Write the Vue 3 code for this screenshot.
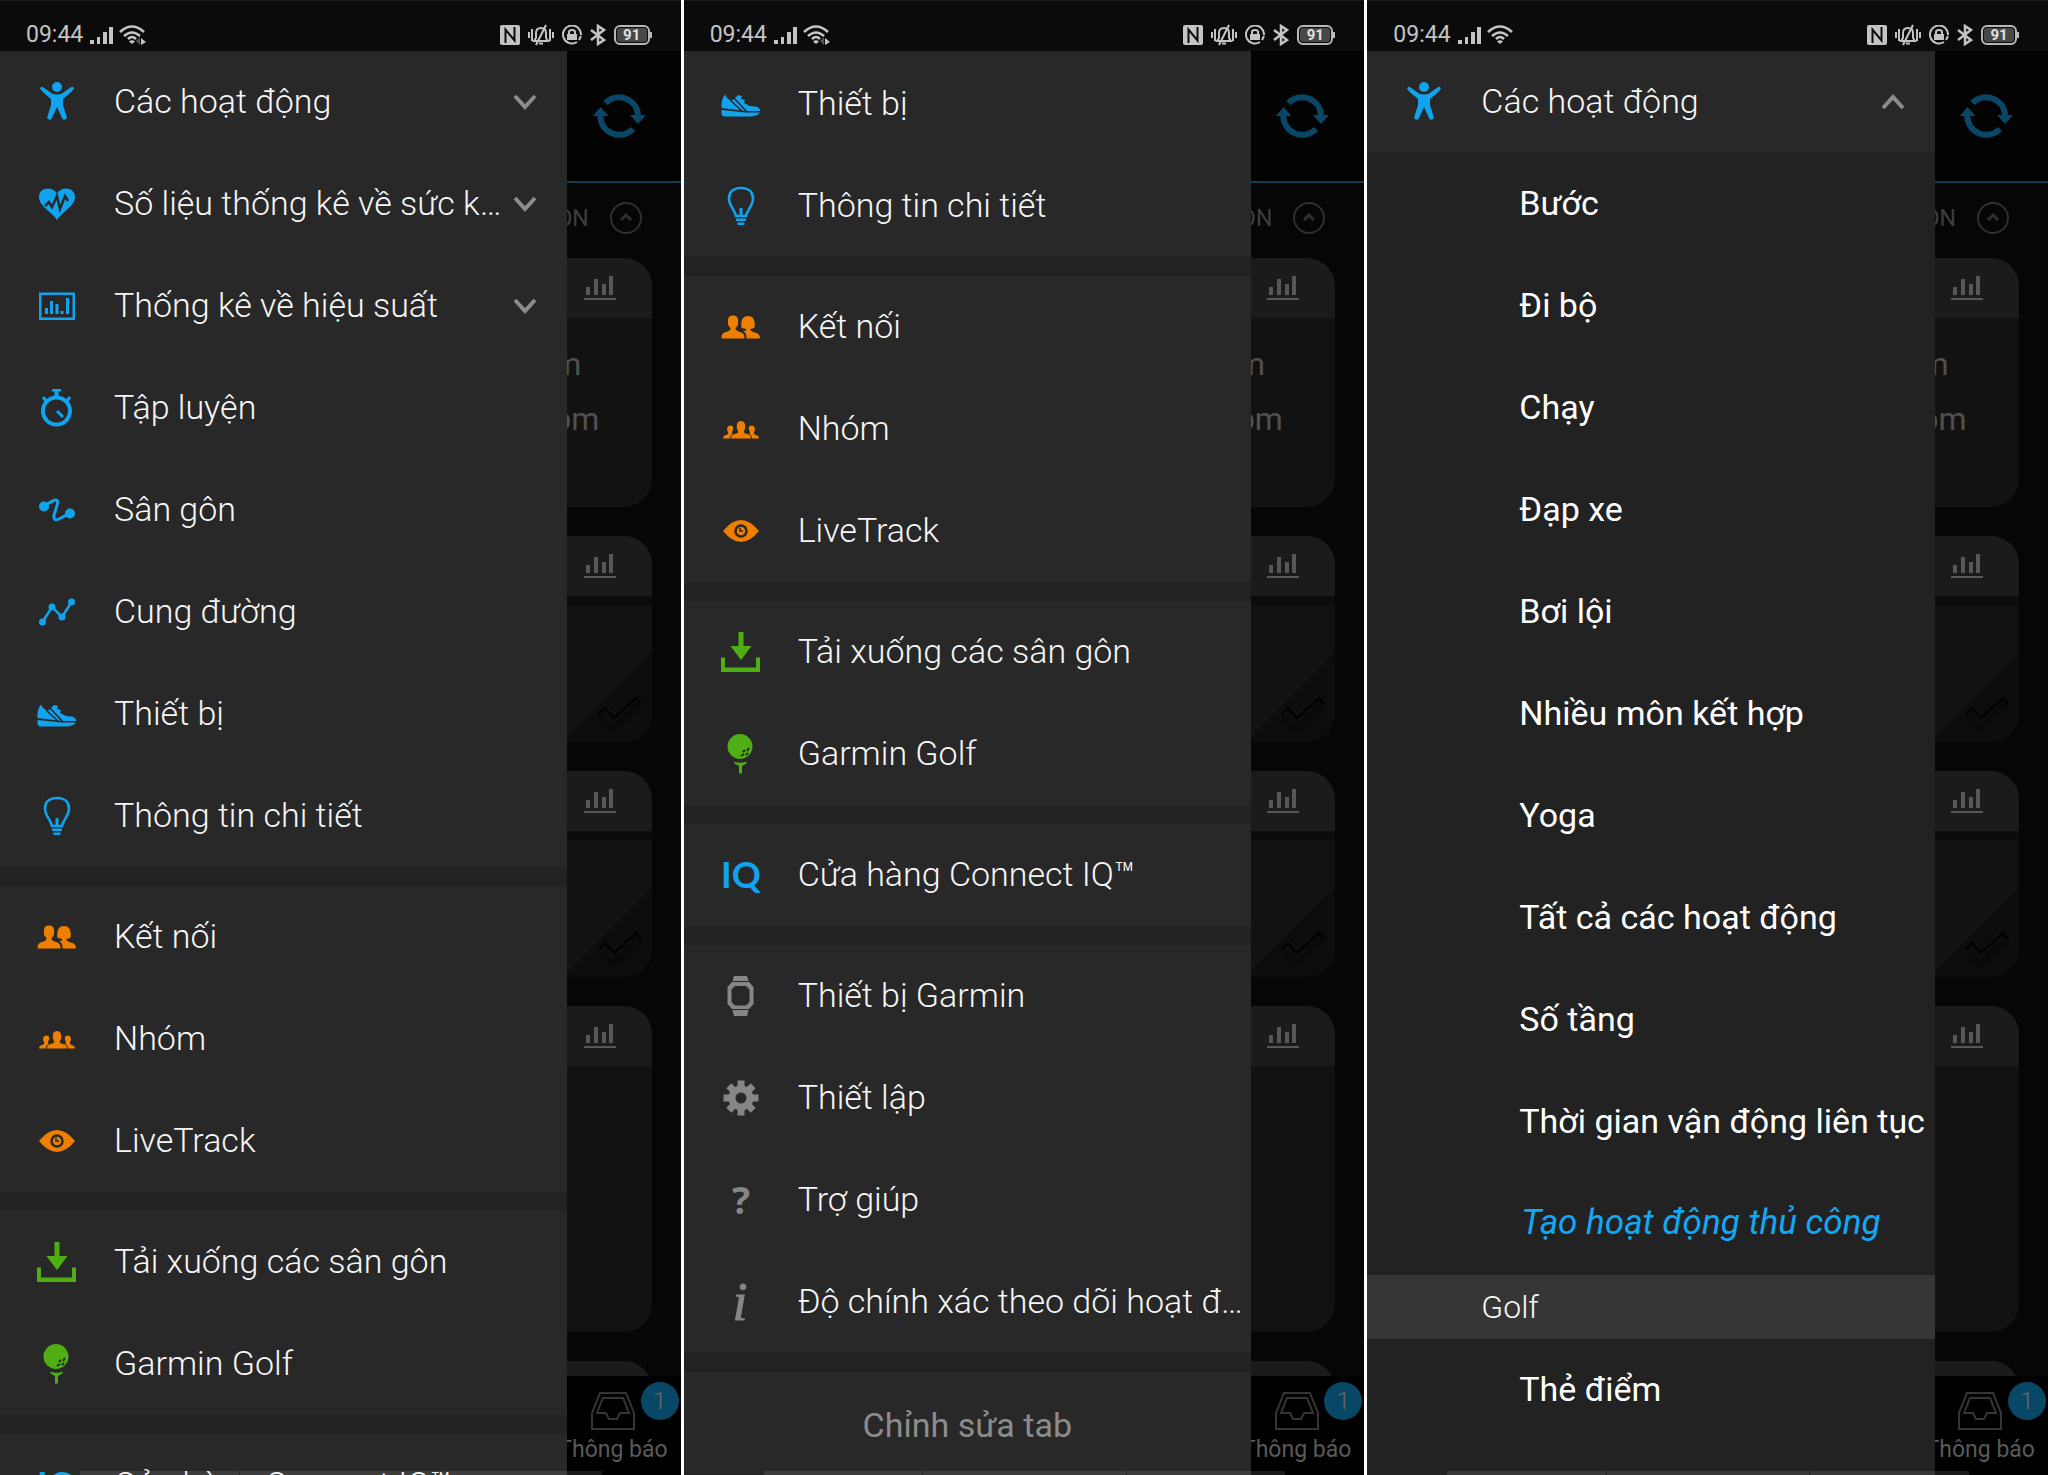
<script setup>
import { ref } from 'vue'

// 44x44 menu icons, drawn in the colour of their row
const icons = {
  person: '<circle cx="22" cy="7" r="5"/><path d="M5 8.5Q6 5.500 8.500 7.500L17 13.500Q22 15.500 27 13.500L35.500 7.500Q38 5.500 39 8.500Q38 11 28 19V25L32 38Q30 41 27.500 39L22 27L16.500 39Q14 41 12 38L16 25V19Q6 11 5 8.500Z"/>',
  heart: '<path d="M22 38C17 30 4 24 4 15.500C4 5 17 4 22 11.500C27 4 40 5 40 15.500C40 24 27 30 22 38Z"/><path d="M10 24l4-4 3 5 5-11 3 13 5-13 3 5" fill="none" stroke="#282828" stroke-width="2.500"/>',
  chart: '<path fill-rule="evenodd" d="M4 8.500H40V36H4ZM6.500 11V33.500H37.500V11Z"/><path d="M10 24h3v6h-3zM15 17h3v13h-3zM20.500 20h3v10h-3zM25.500 27h3v3h-3zM31 14h3v16h-3z"/>',
  stopwatch: '<circle cx="21.500" cy="25" r="13.500" fill="none" stroke="currentColor" stroke-width="4"/><path d="M17 3h9v2.500h-2.500V11h-4V5.500H17z"/><path d="M8 11l3 4M35 11l-3 4" stroke="currentColor" stroke-width="3"/><path d="M22 25l6 6" stroke="currentColor" stroke-width="3"/>',
  course: '<circle cx="9" cy="18.500" r="5"/><circle cx="35" cy="25.500" r="5"/><path d="M10 17C15 15 21 10 22.500 13C24 17 16 29 20 31.500C23 33 28 28 34 26" fill="none" stroke="currentColor" stroke-width="3"/>',
  route: '<circle cx="7.500" cy="32" r="3.500"/><circle cx="17" cy="17" r="3.500"/><circle cx="27" cy="27" r="3.500"/><circle cx="36.500" cy="12" r="3.500"/><path d="M7.500 32L17 17L27 27L36.500 12" fill="none" stroke="currentColor" stroke-width="2.500"/>',
  shoe: '<path d="M2.500 26Q2 17 6 12.500Q9 19 14 18L19 13L23 14L22 17L26 18L25 21Q31 25 37 24.500Q41 26 41.500 29H27Z"/><path d="M2.500 28L27 30.500H41Q38 34.500 31 34.500H5Q2 34.500 2.500 28Z"/><path d="M11 18L24 30M15 16L28 30" stroke="#282828" stroke-width="1.500"/>',
  bulb: '<path d="M17 32C16 26 10 22 10 14.500C10 7.500 15 4 22 4C29 4 34 7.500 34 14.500C34 22 28 26 27 32Z" fill="none" stroke="currentColor" stroke-width="2.600"/><path d="M20.500 24h3v8h-3zM17 34.500h10v2.500h-10zM18.500 38.500h7v2.500h-7z"/>',
  people: '<path d="M2.500 33.500Q2 28 7 27Q12 25.500 11.500 23Q8 20 9 15Q9 10.500 14 10.500Q19 10.500 19 15Q20 20 16.500 23Q16 25.500 21 27Q26 28 25.500 33.500Z"/><path d="M27.500 33.500Q28 28 24 26Q28 26 27 24L22.500 23Q21 11 29 11Q37 11 35.500 23L31.500 24Q30.500 26 36 27.500Q41 28.500 41 33.500Z"/>',
  group: '<path d="M12 31.500Q12 27.500 16 27Q20 26 19 24Q17 21 18 17Q19 14 22 14Q25 14 26 17Q27 21 25 24Q24 26 28 27Q32 27.500 32 31.500Z"/><path d="M4 31.500Q4 28.500 7 28Q10 27 9 25Q7 22 9 19.500Q11 17.500 14 19.500Q15 22 13 25Q13 27 14 27Q11 28 11 31.500ZM40 31.500Q40 28.500 37 28Q34 27 35 25Q37 22 35 19.500Q33 17.500 30 19.500Q29 22 31 25Q31 27 30 27Q33 28 33 31.500Z"/>',
  eye: '<path d="M4 22Q13 11 22 11Q31 11 40 22Q31 33 22 33Q13 33 4 22Z"/><circle cx="22" cy="22" r="5.500" fill="none" stroke="#282828" stroke-width="2.500"/><path d="M21 18.500v3.500h3" fill="none" stroke="#282828" stroke-width="1.500"/>',
  download: '<path d="M19.500 2h5v14h8L22 30L11.500 16h8zM2 27.500h4V37.500H37V27.500h4V42H2Z"/>',
  golf: '<circle cx="21" cy="14.500" r="12.500"/><path d="M15.500 29.500Q21.500 32 27.500 29.500V31.500L23 34V41.500H20V34L15.500 31.500Z"/><path d="M24 20l2-2M28 19l2-3M22 24l3-2M27 23l2-2" stroke="#282828" stroke-width="2"/>',
  watch: '<path d="M15 2h13l1.500 5h-16zM15 42h13l1.500-6h-16z"/><path fill-rule="evenodd" d="M13 8H30L34.500 13V30L30 35H13L8.500 30V13ZM16 12L12.500 15.500V28L16 31.500H27L30.500 28V15.500L27 12Z"/>',
  gear: '<circle cx="22" cy="22" r="9" fill="none" stroke="currentColor" stroke-width="7"/><path d="M22 4.500V12M22 32V39.500M4.500 22H12M32 22H39.500M9.800 9.800L15 15M29 29L34.200 34.200M9.800 34.200L15 29M29 15L34.200 9.800" stroke="currentColor" stroke-width="7"/>',
  iq: '<text x="22" y="35" text-anchor="middle" font-family="Lato, sans-serif" font-size="36" font-weight="700">IQ</text>',
  help: '<text x="22" y="36" text-anchor="middle" font-family="Open Sans, sans-serif" font-size="38" font-weight="700">?</text>',
  info: '<text x="21" y="40" text-anchor="middle" font-family="Liberation Serif, serif" font-size="54" font-style="italic" stroke="currentColor">i</text>'
}

const connectGroup = {
  color: 'orange',
  items: [
    { icon: 'people', label: 'Kết nối' },
    { icon: 'group', label: 'Nhóm' },
    { icon: 'eye', label: 'LiveTrack' }
  ]
}

const golfGroup = {
  color: 'green',
  items: [
    { icon: 'download', label: 'Tải xuống các sân gôn' },
    { icon: 'golf', label: 'Garmin Golf' }
  ]
}

const storeGroup = {
  color: 'blue',
  items: [{ icon: 'iq', label: 'Cửa hàng Connect IQ™' }]
}

const screens = ref([
  {
    syncing: true,
    groups: [
      {
        color: 'blue',
        items: [
          { icon: 'person', label: 'Các hoạt động', expandable: true },
          { icon: 'heart', label: 'Số liệu thống kê về sức khỏe', expandable: true },
          { icon: 'chart', label: 'Thống kê về hiệu suất', expandable: true },
          { icon: 'stopwatch', label: 'Tập luyện' },
          { icon: 'course', label: 'Sân gôn' },
          { icon: 'route', label: 'Cung đường' },
          { icon: 'shoe', label: 'Thiết bị' },
          { icon: 'bulb', label: 'Thông tin chi tiết' }
        ]
      },
      connectGroup,
      golfGroup,
      storeGroup
    ]
  },
  {
    syncing: true,
    scrolled: true,
    editable: true,
    groups: [
      {
        color: 'blue',
        items: [
          { icon: 'shoe', label: 'Thiết bị' },
          { icon: 'bulb', label: 'Thông tin chi tiết' }
        ]
      },
      connectGroup,
      golfGroup,
      storeGroup,
      {
        color: 'gray',
        items: [
          { icon: 'watch', label: 'Thiết bị Garmin' },
          { icon: 'gear', label: 'Thiết lập' },
          { icon: 'help', label: 'Trợ giúp' },
          { icon: 'info', label: 'Độ chính xác theo dõi hoạt động' }
        ]
      }
    ]
  },
  {
    groups: [
      {
        color: 'blue',
        items: [
          {
            icon: 'person',
            label: 'Các hoạt động',
            expandable: true,
            open: true,
            children: [
              { label: 'Bước' },
              { label: 'Đi bộ' },
              { label: 'Chạy' },
              { label: 'Đạp xe' },
              { label: 'Bơi lội' },
              { label: 'Nhiều môn kết hợp' },
              { label: 'Yoga' },
              { label: 'Tất cả các hoạt động' },
              { label: 'Số tầng' },
              { label: 'Thời gian vận động liên tục' },
              { label: 'Tạo hoạt động thủ công', create: true },
              { label: 'Golf', heading: true },
              { label: 'Thẻ điểm' }
            ]
          }
        ]
      }
    ]
  }
])

// Dimmed cards of the day view behind the drawer
const cards = [
  { kind: 'stats', lines: ['m', 'pm'] },
  { kind: 'goal' },
  { kind: 'goal' },
  { kind: 'tall' },
  { kind: 'tall' }
]

const toggle = (item) => {
  if (item.expandable) item.open = !item.open
}
</script>

<template>
  <main class="board">
    <section v-for="(screen, i) in screens" :key="i" class="phone">
      <header class="status">
        <span class="time">09:44</span>
        <svg class="signal" width="24" height="20" viewBox="0 0 24 20">
          <path d="M0 15h4v4H0zM7 12h3v7H7zM13 7h4v12h-4zM19 2h4v17h-4z" />
        </svg>
        <svg class="wifi" width="28" height="20" viewBox="0 0 28 20">
          <g fill="none" stroke="currentColor" stroke-width="2.5">
            <path d="M1 7Q13 -4 25 7" />
            <path d="M5 11Q13 4 21 11" />
            <path d="M9 14Q13 10 17 14" />
          </g>
          <path d="M10 16.500Q13 14 16 16.500L13 19Z" />
          <path v-if="screen.syncing" d="M22 13l5 4-5 3z" />
          <path v-if="screen.syncing" d="M21 12v8l-4-4z" opacity=".4" />
        </svg>
        <div class="status-icons">
          <svg width="20" height="20" viewBox="0 0 20 20">
            <rect width="20" height="20" rx="2" />
            <path d="M5.500 18V4.500L14.500 15.500V2" fill="none" stroke="#0b0b0b" stroke-width="2" />
          </svg>
          <svg width="26" height="22" viewBox="0 0 26 22">
            <g fill="none" stroke="currentColor" stroke-width="2">
              <path d="M1 8v6M4 5v12M22 5v12M25 8v6M6 17H20L18 14V9Q18 4 13 4Q8 4 8 9V14Z" />
              <path d="M8 21L18 1M11 19.500h4" />
            </g>
          </svg>
          <svg width="20" height="20" viewBox="0 0 20 20">
            <path d="M15 17A9 9 0 1 1 19 10M17 15l2-4" fill="none" stroke="currentColor" stroke-width="2" />
            <path d="M5 9h10v6H5z" />
            <path d="M7 10V7Q7 5 10 5Q13 5 13 7V10" fill="none" stroke="currentColor" stroke-width="2" />
          </svg>
          <svg width="16" height="22" viewBox="0 0 16 22">
            <path d="M1 6L14 16L8 20V2L14 6L1 16" fill="none" stroke="currentColor" stroke-width="2.500" />
          </svg>
          <div class="battery"><span>91</span></div>
        </div>
      </header>

      <div class="content">
        <nav class="drawer" :class="{ scrolled: screen.scrolled }">
          <div v-for="(group, g) in screen.groups" :key="g" class="group" :class="group.color">
            <template v-for="item in group.items" :key="item.label">
              <button type="button" class="row" @click="toggle(item)">
                <svg class="row-icon" width="44" height="44" viewBox="0 0 44 44" v-html="icons[item.icon]"></svg>
                <span class="row-label">{{ item.label }}</span>
                <svg v-if="item.expandable" class="chevron" :class="{ up: item.open }" width="24" height="16" viewBox="0 0 24 16">
                  <path d="M2 2L12 13L22 2" />
                </svg>
              </button>
              <div v-if="item.open" class="children">
                <template v-for="child in item.children" :key="child.label">
                  <div v-if="child.heading" class="heading">{{ child.label }}</div>
                  <a v-else href="#" class="child" :class="{ create: child.create }">{{ child.label }}</a>
                </template>
              </div>
            </template>
          </div>
          <button v-if="screen.editable" type="button" class="edit">Chỉnh sửa tab</button>
        </nav>

        <div class="backdrop">
          <div class="topbar">
            <svg width="54" height="46" viewBox="0 0 54 46">
              <path d="M12.500 9A19 19 0 0 1 45 21M7.300 22A19 19 0 0 0 40 35" fill="none" stroke="currentColor" stroke-width="6" />
              <path d="M37 21H53L45 30ZM0 22H15.500L7.500 13Z" />
            </svg>
          </div>
          <div class="section-head">
            <span>ON</span>
            <svg width="34" height="34" viewBox="0 0 34 34">
              <circle cx="17" cy="17" r="15" />
              <path d="M12 19L17 14L22 19" stroke-width="3" />
            </svg>
          </div>
          <div class="cards">
            <article v-for="(card, c) in cards" :key="c" class="card" :class="card.kind">
              <div class="card-head">
                <svg width="32" height="26" viewBox="0 0 32 26">
                  <path d="M2 12h4v8H2zM10 4h4v16h-4zM18 9h4v11h-4zM25 1h4v19h-4zM0 23h32v2H0z" />
                </svg>
              </div>
              <div class="card-body">
                <span v-for="line in card.lines" :key="line">{{ line }}</span>
                <svg v-if="card.kind === 'goal'" class="corner" width="90" height="90" viewBox="0 0 90 90">
                  <path d="M90 0V90H0Z" fill="#0d0d0d" />
                  <path d="M37 61L51 74L76 46L80 54L51 82L37 66Z" fill="#0a0a0a" />
                  <path d="M37 62L43 56L52 66L74 46L79 52" fill="none" stroke="#000" stroke-width="2" />
                </svg>
              </div>
            </article>
          </div>
          <div class="tab">
            <svg width="44" height="40" viewBox="0 0 44 40">
              <path d="M1 38V22L9 2H35L43 22V38ZM6 22L12 7H32L38 22H29L26 28H18L15 22Z" />
            </svg>
            <span class="tab-label">Thông báo</span>
            <span class="badge">1</span>
          </div>
        </div>
      </div>

      <div class="gesture-bar"><i></i><i></i><i></i></div>
    </section>
  </main>
</template>

<style>
body {
  margin: 0;
  background: #fff;
}
</style>

<style scoped>
.board {
  display: grid;
  grid-template-columns: repeat(3, minmax(0, 1fr));
  gap: 3px;
  height: 100vh;
  background: #fff;
  font-family: Roboto, "Noto Sans", sans-serif;
}

.phone {
  position: relative;
  display: flex;
  flex-direction: column;
  min-height: 0;
  overflow: hidden;
  background: #060606;
}

svg {
  flex: none;
  fill: currentColor;
}

.status {
  display: flex;
  align-items: flex-end;
  flex: none;
  box-sizing: border-box;
  height: 51px;
  padding: 0 29px 6px 26px;
  border-top: 1px solid #1c1c1c;
  background: #0b0b0b;
  color: #c4c4c4;
}

.time {
  font-size: 23px;
  line-height: 20px;
}

.signal {
  margin-left: 7px;
}

.wifi {
  margin-left: 5px;
}

.status-icons {
  display: flex;
  align-items: center;
  gap: 8px;
  height: 20px;
  margin-left: auto;
}

.battery {
  position: relative;
  box-sizing: border-box;
  width: 36px;
  height: 20px;
  margin-right: 2px;
  padding: 1px;
  border: 2px solid #b8b8b8;
  border-radius: 6px;
}

.battery::after {
  content: '';
  position: absolute;
  top: 5px;
  right: -4px;
  width: 2px;
  height: 6px;
  background: #b8b8b8;
}

.battery span {
  display: block;
  border-radius: 3px;
  background: #484848;
  color: #e0e0e0;
  font-size: 15px;
  font-weight: 700;
  line-height: 14px;
  text-align: center;
}

.content {
  display: grid;
  grid-template-columns: minmax(0, 5fr) minmax(0, 1fr);
  flex: 1;
  min-height: 0;
}

.drawer {
  display: flex;
  flex-direction: column;
  gap: 19px;
  min-height: 0;
  overflow: hidden;
  background: #222;
}

.drawer.scrolled::before {
  content: '';
  flex: none;
  height: 2px;
  margin-bottom: -19px;
  background: #282828;
}

.group {
  flex: none;
}

.row,
.edit {
  display: flex;
  align-items: center;
  width: 100%;
  height: 102px;
  margin: 0;
  border: 0;
  background: #282828;
  font-family: inherit;
  font-size: 34px;
  text-align: left;
  cursor: pointer;
}

.row {
  padding: 0 7px 0 35px;
  color: #f6f6f6;
  font-weight: 300;
}

.row-icon {
  margin-right: 35px;
}

.blue .row-icon {
  color: #11a3ed;
}

.orange .row-icon {
  color: #ee7f00;
}

.green .row-icon {
  color: #4fae13;
}

.gray .row-icon {
  color: #868686;
}

.row-label {
  flex: 1;
  min-width: 0;
  padding-bottom: 2px;
  overflow: hidden;
  line-height: 48px;
  text-overflow: ellipsis;
  white-space: nowrap;
}

.chevron {
  margin: 0 23px 0 7px;
  fill: none;
  stroke: #8c8c8c;
  stroke-width: 4;
}

.chevron.up {
  transform: rotate(180deg);
}

.edit {
  flex: none;
  justify-content: center;
  padding: 4px 0 0;
  color: #8c8c8c;
}

.child {
  display: block;
  box-sizing: border-box;
  height: 102px;
  padding-left: 152px;
  color: #fff;
  font-size: 34px;
  line-height: 100px;
  text-decoration: none;
  white-space: nowrap;
}

.child.create {
  padding-left: 154px;
  color: #11a9f5;
  font-size: 35px;
  font-style: italic;
}

.heading {
  height: 64px;
  padding-left: 114px;
  background: #363636;
  color: #f6f6f6;
  font-size: 32px;
  font-weight: 300;
  line-height: 64px;
}

.backdrop {
  display: flex;
  flex-direction: column;
  min-height: 0;
  overflow: hidden;
}

.topbar {
  display: flex;
  align-items: center;
  justify-content: flex-end;
  flex: none;
  box-sizing: border-box;
  height: 132px;
  padding: 2px 34px 0 0;
  border-bottom: 2px solid #0a4158;
  background: #030303;
  color: #0a4766;
}

.section-head {
  display: flex;
  align-items: center;
  justify-content: flex-end;
  flex: none;
  gap: 20px;
  height: 70px;
  padding: 0 38px 5px 0;
  color: #3e3e3e;
  font-size: 23px;
}

.section-head svg {
  fill: none;
  stroke: #303030;
  stroke-width: 2;
}

.cards {
  display: flex;
  flex-direction: column;
  flex: 1;
  gap: 29px;
  min-height: 0;
  overflow: hidden;
}

.card {
  display: flex;
  flex-direction: column;
  flex: none;
  margin-right: 29px;
  overflow: hidden;
  border-radius: 0 28px 28px 0;
  background: #121212;
}

.card-head {
  display: flex;
  align-items: center;
  justify-content: flex-end;
  height: 60px;
  padding-right: 36px;
  background: #1b1b1b;
  color: #575757;
}

.card-body {
  position: relative;
  display: flex;
  flex-direction: column;
  box-sizing: border-box;
}

.stats .card-body {
  height: 189px;
  margin-left: -14px;
  padding-top: 19px;
  color: #505050;
  font-size: 32px;
  line-height: 55px;
}

.goal .card-body {
  height: 146px;
  border-top: 9px solid #0c0c0c;
}

.tall .card-body {
  height: 266px;
}

.corner {
  position: absolute;
  right: 0;
  bottom: 0;
}

.tab {
  position: relative;
  display: flex;
  flex-direction: column;
  align-items: center;
  flex: none;
  box-sizing: border-box;
  height: 99px;
  padding: 15px 22px 0 0;
  background: #000;
}

.tab svg {
  fill: none;
  stroke: #353535;
  stroke-width: 2;
}

.tab-label {
  margin-top: 5px;
  color: #5a5a5a;
  font-size: 23px;
  line-height: 28px;
  white-space: nowrap;
}

.badge {
  position: absolute;
  top: 6px;
  right: 2px;
  width: 38px;
  height: 38px;
  border-radius: 50%;
  background: #084866;
  color: #6a6a6a;
  font-size: 24px;
  font-weight: 300;
  line-height: 38px;
  text-align: center;
}

.gesture-bar {
  position: absolute;
  right: 79px;
  bottom: 0;
  left: 80px;
  display: grid;
  grid-template-columns: 159fr 203fr 159fr;
  gap: 1px;
  height: 4px;
}

.gesture-bar i {
  background: rgba(255, 255, 255, 0.1);
}
</style>
